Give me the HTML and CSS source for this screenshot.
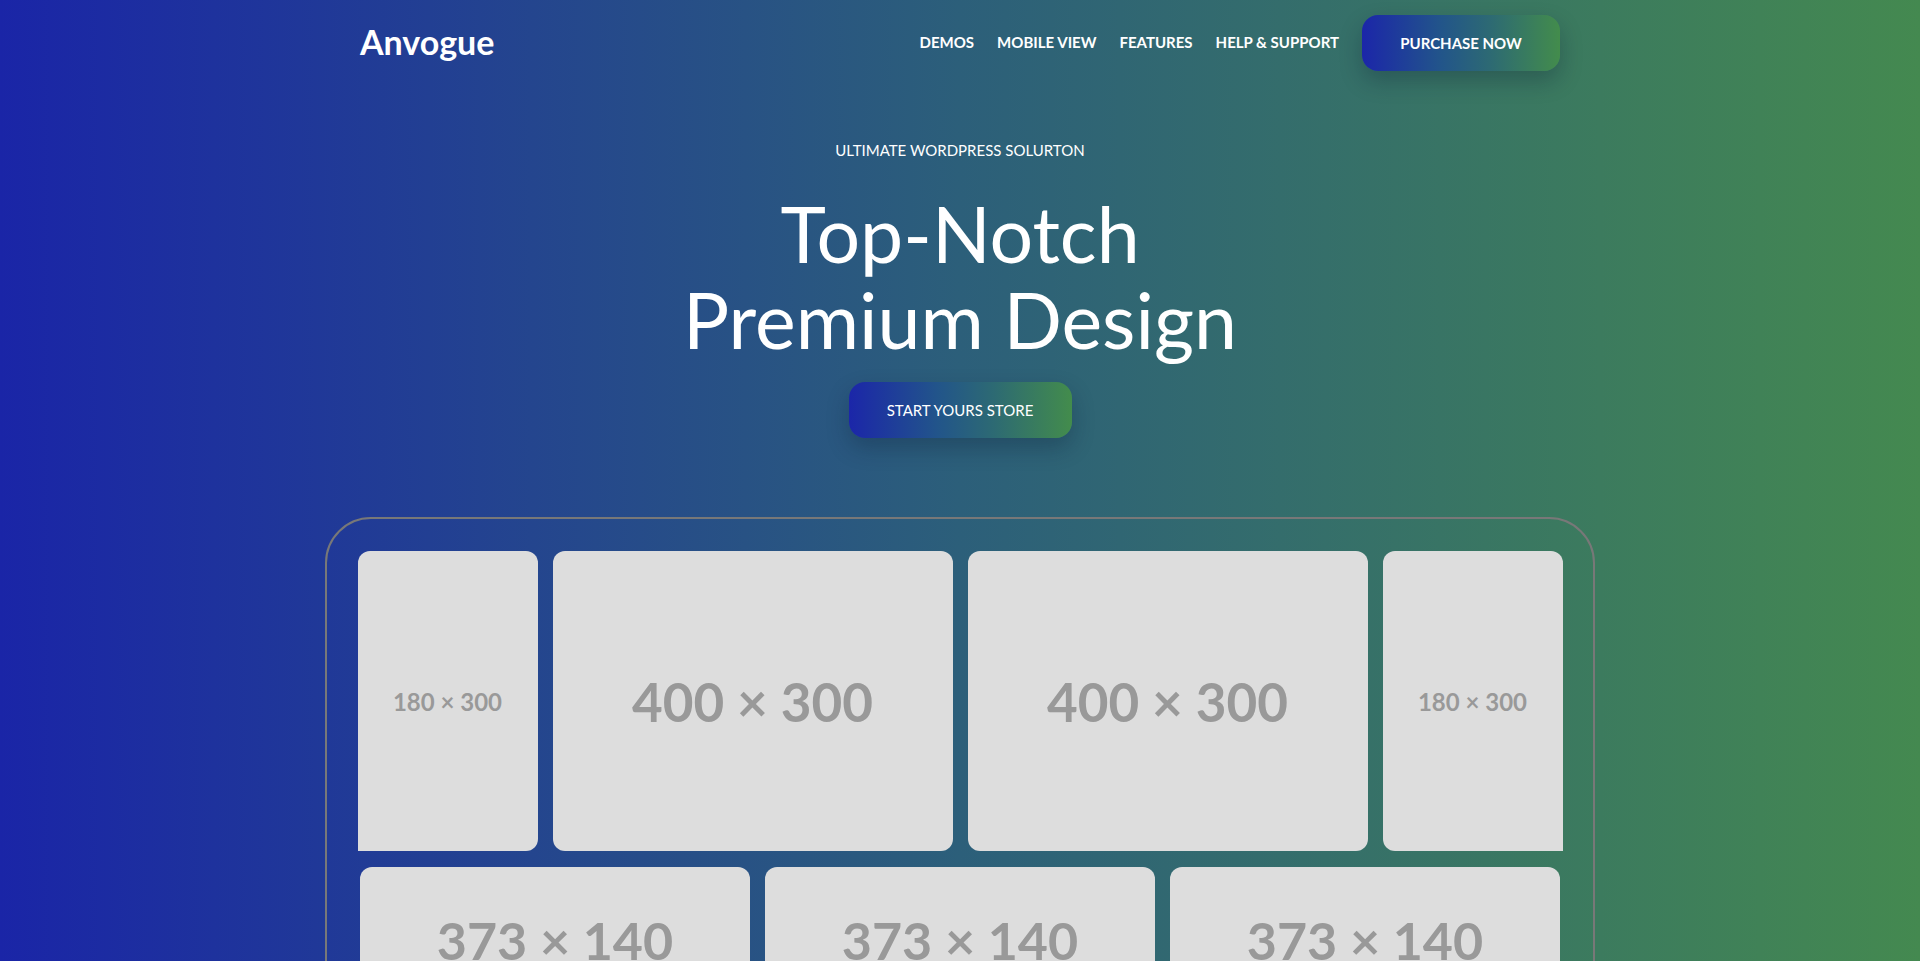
FILE: index.html
```html
<!DOCTYPE html>
<html lang="en">
<head>
<meta charset="utf-8">
<title>Anvogue</title>
<link rel="stylesheet" href="styles.css">
</head>
<body>
<div class="page">
  <header class="header">
    <div class="logo">Anvogue</div>
    <nav class="nav">
      <a class="nav-link" href="#">DEMOS</a>
      <a class="nav-link" href="#">MOBILE VIEW</a>
      <a class="nav-link" href="#">FEATURES</a>
      <a class="nav-link" href="#">HELP &amp; SUPPORT</a>
      <a class="btn btn-nav" href="#">PURCHASE NOW</a>
    </nav>
  </header>

  <section class="hero">
    <div class="eyebrow">ULTIMATE WORDPRESS SOLURTON</div>
    <h1 class="title">Top-Notch<br>Premium Design</h1>
    <a class="btn btn-hero" href="#">START YOURS STORE</a>
  </section>

  <section class="frame">
    <div class="row row-top">
      <div class="ph ph-narrow ph-first">180 × 300</div>
      <div class="ph ph-wide">400 × 300</div>
      <div class="ph ph-wide">400 × 300</div>
      <div class="ph ph-narrow ph-last">180 × 300</div>
    </div>
    <div class="row row-bottom">
      <div class="ph ph-strip">373 × 140</div>
      <div class="ph ph-strip">373 × 140</div>
      <div class="ph ph-strip">373 × 140</div>
    </div>
  </section>
</div>
</body>
</html>
```

FILE: styles.css
```css
* { box-sizing: border-box; }

html, body {
  margin: 0;
  padding: 0;
}

body {
  font-family: Lato, "Open Sans", "Liberation Sans", sans-serif;
  color: #fff;
  background: linear-gradient(90deg, #1a25a7 0%, #2c5f7a 50%, #448950 100%);
  min-height: 961px;
  overflow: hidden;
}

.page {
  min-height: 961px;
}

.header {
  width: 1200px;
  margin: 0 auto;
  padding-top: 15px;
  display: flex;
  align-items: center;
  justify-content: space-between;
}

.logo {
  font-size: 34px;
  font-weight: 700;
  line-height: 40px;
  margin-top: -2px;
}

.nav {
  display: flex;
  align-items: center;
  gap: 23px;
}

.nav-link {
  color: #fff;
  text-decoration: none;
  font-size: 15px;
  font-weight: 700;
  line-height: 20px;
  margin-top: -2px;
}

.btn {
  display: inline-flex;
  align-items: center;
  justify-content: center;
  color: #fff;
  text-decoration: none;
  height: 56px;
  border-radius: 16px;
  background: linear-gradient(90deg, #1b26a9 0%, #22558a 40%, #2d6a73 65%, #438c4c 100%);
  box-shadow: 0 10px 22px rgba(10, 25, 50, 0.28);
}

.btn-nav {
  width: 198px;
  font-size: 15px;
  font-weight: 700;
}

.hero {
  display: flex;
  flex-direction: column;
  align-items: center;
  text-align: center;
  padding-top: 68px;
}

.eyebrow {
  font-size: 15px;
  line-height: 22px;
  font-weight: 400;
}

.title {
  margin: 29px 0 0;
  font-size: 77px;
  line-height: 86px;
  font-weight: 400;
}

.btn-hero {
  margin-top: 20px;
  width: 223px;
  font-size: 15px;
  font-weight: 400;
}

.frame {
  width: 1270px;
  margin: 79px auto 0;
  border: 2px solid #787878;
  border-radius: 46px;
  padding: 32px 0 40px;
  display: flex;
  flex-direction: column;
  align-items: center;
  gap: 16px;
}

.row {
  display: flex;
  gap: 15px;
}

.ph {
  background: #dddddd;
  color: #999999;
  font-weight: 700;
  display: flex;
  align-items: center;
  justify-content: center;
  border-radius: 12px;
  white-space: nowrap;
}

.ph-narrow {
  width: 180px;
  height: 300px;
  font-size: 24px;
}

.ph-first { border-bottom-left-radius: 0; }
.ph-last { border-bottom-right-radius: 0; }

.ph-wide {
  width: 400px;
  height: 300px;
  font-size: 53px;
}

.ph-strip {
  width: 390px;
  height: 146px;
  font-size: 52px;
}
```
